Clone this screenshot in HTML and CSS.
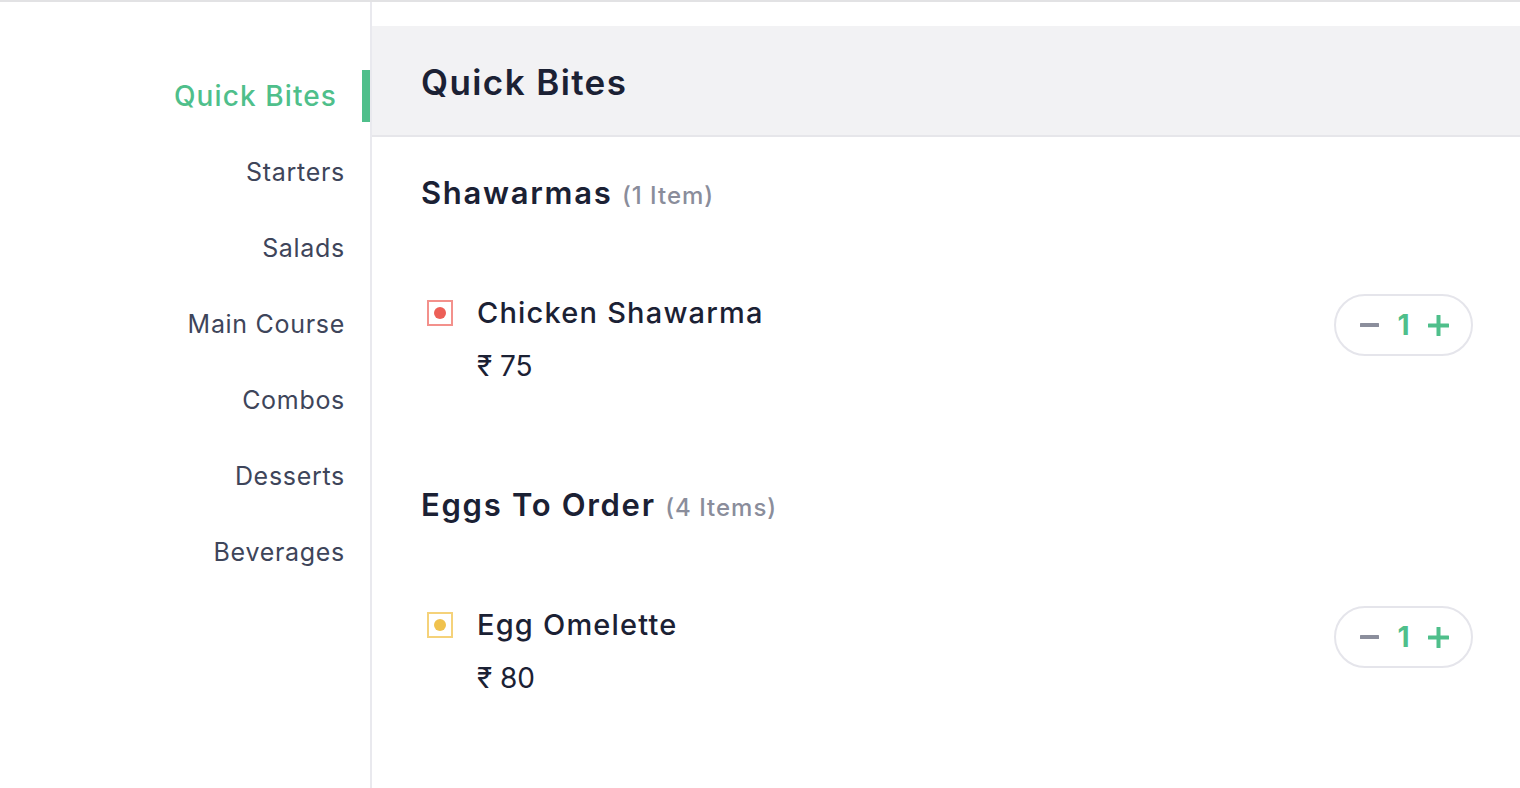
FILE: index.html
```html
<!DOCTYPE html>
<html lang="en">
<head>
<meta charset="utf-8">
<title>Menu</title>
<link rel="stylesheet" href="styles.css">
</head>
<body>
<div class="layout">
  <aside class="sidebar">
    <nav class="cats">
      <a class="cat active">Quick Bites</a>
      <a class="cat">Starters</a>
      <a class="cat">Salads</a>
      <a class="cat">Main Course</a>
      <a class="cat">Combos</a>
      <a class="cat">Desserts</a>
      <a class="cat">Beverages</a>
    </nav>
  </aside>
  <main class="main">
    <header class="cat-header"><h1>Quick Bites</h1></header>
    <section class="section">
      <h2 class="sec-title">Shawarmas <span class="count">(1 Item)</span></h2>
      <div class="item">
        <div class="item-left">
          <span class="food-mark nonveg"><span class="dot"></span></span>
          <div class="item-text">
            <div class="item-name">Chicken Shawarma</div>
            <div class="item-price">₹ 75</div>
          </div>
        </div>
        <div class="counter">
          <svg class="minus" width="19" height="4" viewBox="0 0 19 4"><rect width="19" height="4" rx="0.5"/></svg>
          <span class="qty">1</span>
          <svg class="plus" width="21" height="21" viewBox="0 0 21 21"><rect x="8.5" y="0" width="4" height="21" rx="0.5"/><rect x="0" y="8.5" width="21" height="4" rx="0.5"/></svg>
        </div>
      </div>
    </section>
    <section class="section">
      <h2 class="sec-title">Eggs To Order <span class="count">(4 Items)</span></h2>
      <div class="item">
        <div class="item-left">
          <span class="food-mark egg"><span class="dot"></span></span>
          <div class="item-text">
            <div class="item-name">Egg Omelette</div>
            <div class="item-price">₹ 80</div>
          </div>
        </div>
        <div class="counter">
          <svg class="minus" width="19" height="4" viewBox="0 0 19 4"><rect width="19" height="4" rx="0.5"/></svg>
          <span class="qty">1</span>
          <svg class="plus" width="21" height="21" viewBox="0 0 21 21"><rect x="8.5" y="0" width="4" height="21" rx="0.5"/><rect x="0" y="8.5" width="21" height="4" rx="0.5"/></svg>
        </div>
      </div>
    </section>
  </main>
</div>
</body>
</html>
```
FILE: styles.css
```css
* { box-sizing: border-box; }
html, body { margin: 0; padding: 0; }
body {
  font-family: Inter, "Noto Sans", sans-serif;
  color: #1b2134;
  background: #fff;
  border-top: 2px solid #e2e2e4;
  overflow: hidden;
}
.layout {
  display: flex;
  height: 786px;
}
.sidebar {
  width: 372px;
  flex: none;
  border-right: 2px solid #e9e9ee;
  padding-top: 68px;
}
.cats {
  display: flex;
  flex-direction: column;
  align-items: flex-end;
  gap: 24px;
}
.cat {
  display: flex;
  align-items: center;
  justify-content: flex-end;
  height: 52px;
  padding-right: 25px;
  font-size: 25px;
  color: #3e455a;
  letter-spacing: 0.7px;
}
.cat.active {
  color: #4fbf8b;
  font-size: 28px;
  font-weight: 500;
  letter-spacing: 1.1px;
  border-right: 8px solid #4fbf8b;
}
.main {
  flex: 1;
  padding-top: 24px;
}
.cat-header {
  height: 111px;
  background: #f2f2f4;
  border-bottom: 2px solid #e6e6ea;
  padding-left: 49px;
  display: flex;
  align-items: center;
}
.cat-header h1 {
  margin: 0;
  font-size: 35px;
  font-weight: 600;
  letter-spacing: 1.4px;
  color: #1b2134;
  padding-top: 2px;
}
.section {
  padding: 36px 47px 0 49px;
}
.sec-title {
  margin: 0;
  height: 40px;
  line-height: 40px;
  font-size: 31px;
  font-weight: 600;
  letter-spacing: 1.7px;
  color: #1b2134;
}
.count {
  font-size: 24px;
  font-weight: 500;
  letter-spacing: 1px;
  color: #8a8d9b;
}
.item {
  margin-top: 81px;
  margin-bottom: 65px;
  display: flex;
  justify-content: space-between;
  align-items: flex-start;
}
.item-left {
  display: flex;
  align-items: flex-start;
}
.food-mark {
  width: 26px;
  height: 26px;
  margin: 6px 24px 0 6px;
  border: 2px solid;
  display: flex;
  align-items: center;
  justify-content: center;
}
.food-mark .dot {
  width: 12px;
  height: 12px;
  border-radius: 50%;
}
.nonveg { border-color: #f3918c; }
.nonveg .dot { background: #ec5f57; }
.egg { border-color: #f5d27a; }
.egg .dot { background: #f0c24d; }
.item-name {
  height: 38px;
  line-height: 38px;
  font-size: 29px;
  font-weight: 500;
  color: #1b2134;
  letter-spacing: 1.2px;
}
.item-price {
  margin-top: 16px;
  height: 36px;
  line-height: 36px;
  font-size: 28px;
  color: #1b2134;
}
.counter {
  width: 139px;
  height: 62px;
  border: 2px solid #e5e5eb;
  border-radius: 31px;
  display: flex;
  align-items: center;
  justify-content: center;
  gap: 18px;
  padding-left: 2px;
}
.minus { fill: #8b8e9c; display: block; }
.plus { fill: #4fbf8b; display: block; }
.qty {
  color: #4fbf8b;
  font-size: 28px;
  font-weight: 700;
  line-height: 1;
}
```
